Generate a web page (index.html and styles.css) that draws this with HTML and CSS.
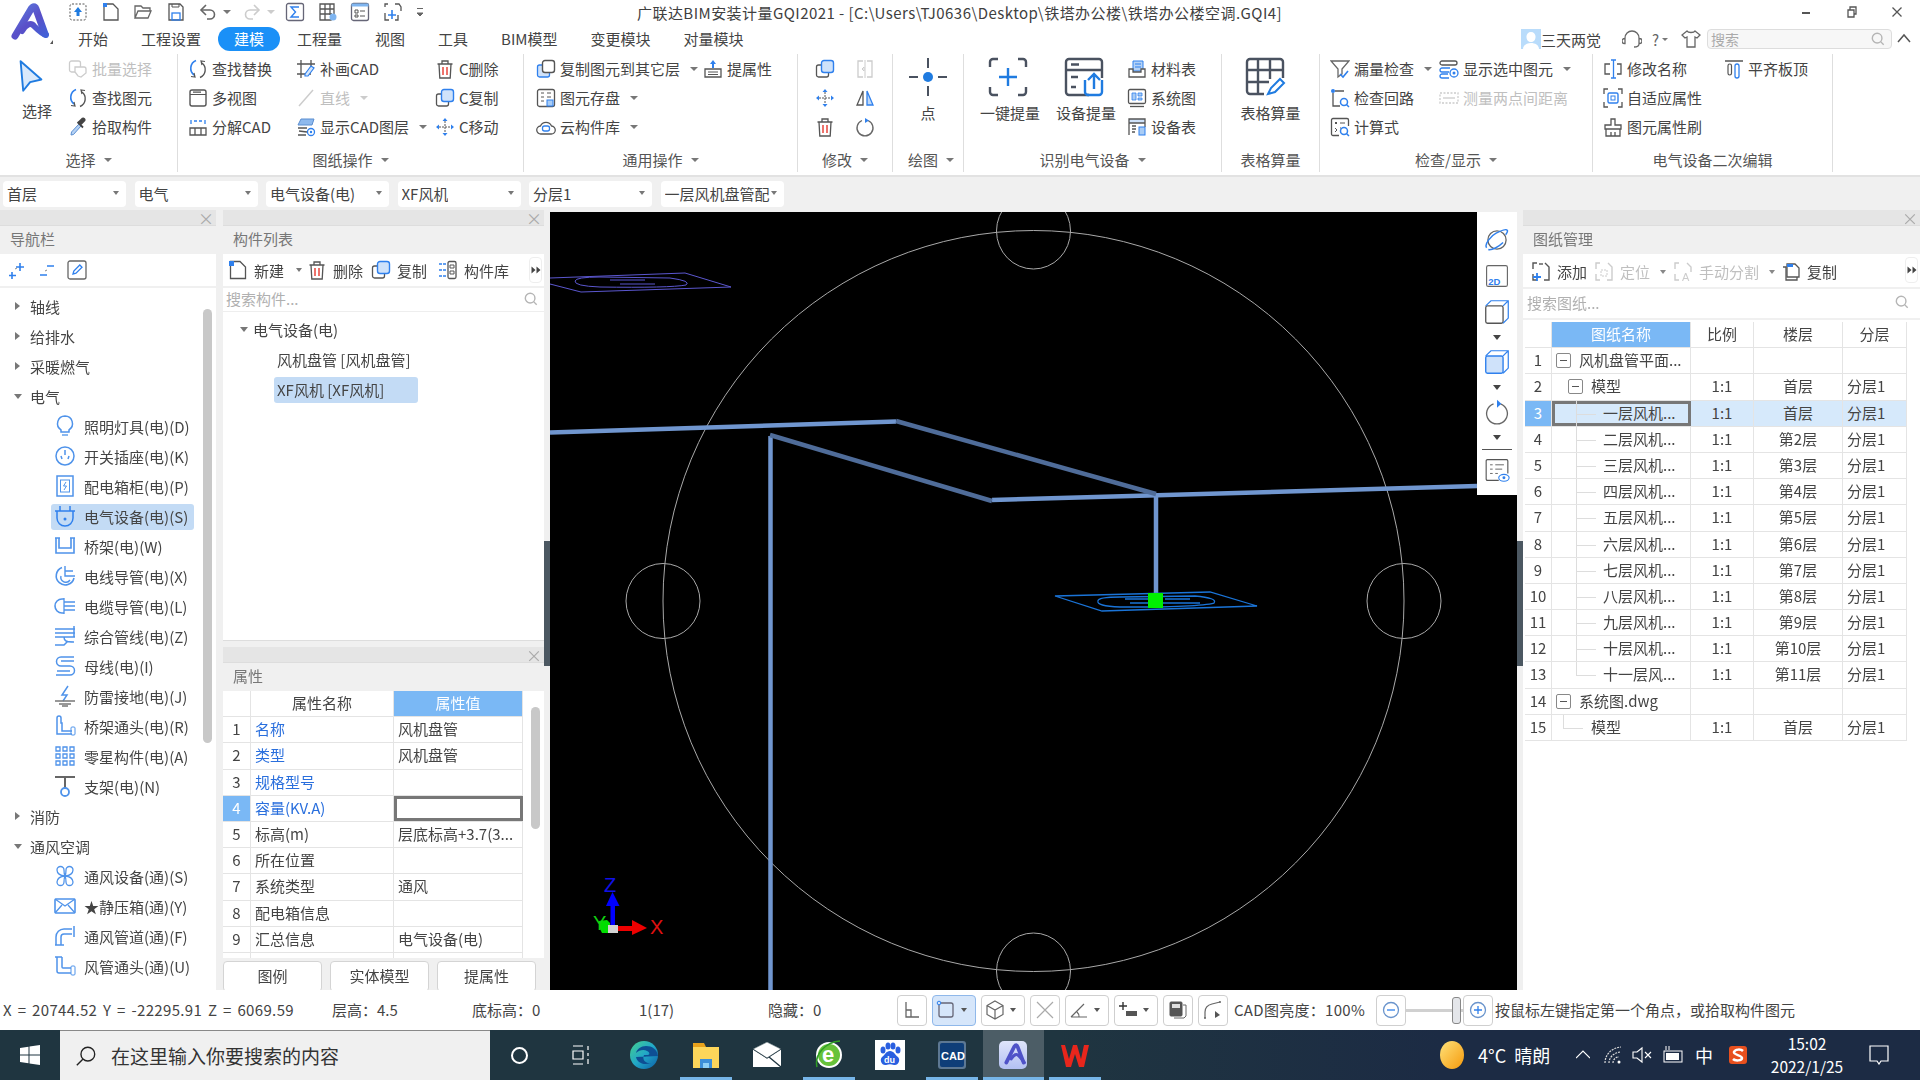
FILE: index.html
```html
<!DOCTYPE html>
<html lang="zh-CN">
<head>
<meta charset="utf-8">
<title>广联达BIM安装计量GQI2021</title>
<link rel="stylesheet" href="styles.css">
</head>
<body>
<svg class="sprite" xmlns="http://www.w3.org/2000/svg">
  <defs>
    <linearGradient id="logoGrad" gradientUnits="userSpaceOnUse" x1="15" y1="5" x2="45" y2="40"><stop offset="0" stop-color="#5a7fe0"/><stop offset=".5" stop-color="#5a4fc8"/><stop offset="1" stop-color="#3f63d8"/></linearGradient>
    <linearGradient id="edgeGrad" x1="0" y1="0" x2="1" y2="1"><stop offset="0" stop-color="#45d08e"/><stop offset=".5" stop-color="#22a8c8"/><stop offset="1" stop-color="#0c5fa8"/></linearGradient>
    <linearGradient id="sunGrad" x1="0" y1="0" x2="1" y2="1"><stop offset="0" stop-color="#ffe27a"/><stop offset="1" stop-color="#f59a0c"/></linearGradient>
    <linearGradient id="appGrad" x1="0" y1="0" x2="0" y2="1"><stop offset="0" stop-color="#dfe5fb"/><stop offset="1" stop-color="#b3c0f2"/></linearGradient>
  </defs>
  <symbol id="q-up" viewBox="0 0 20 20"><rect x="2" y="2" width="16" height="16" rx="2" fill="none" stroke="#555" stroke-dasharray="2 1.5"/><path d="M10 5l4 5h-2.500v4h-3v-4H6z" fill="#1f7be0"/></symbol>
  <symbol id="q-new" viewBox="0 0 20 20"><path d="M3 2h9l5 5v11H3z" fill="none" stroke="#555" stroke-width="1.300"/><rect x="2" y="1" width="4" height="4" fill="#2f80ed"/></symbol>
  <symbol id="q-open" viewBox="0 0 20 20"><path d="M2 16V4h6l2 2h7v3M2 16l3-7h13l-3 7z" fill="none" stroke="#666" stroke-width="1.300"/></symbol>
  <symbol id="q-save" viewBox="0 0 20 20"><path d="M3 2h11l3 3v13H3z" fill="none" stroke="#555" stroke-width="1.300"/><rect x="6" y="11" width="8" height="7" fill="none" stroke="#2f80ed" stroke-width="1.300"/><path d="M6 2v3h7V2" fill="none" stroke="#555"/></symbol>
  <symbol id="q-undo" viewBox="0 0 20 20"><path d="M4 8h8a4.500 4.500 0 0 1 0 9H9" fill="none" stroke="#666" stroke-width="1.600"/><path d="M8 3L3 8l5 5" fill="none" stroke="#666" stroke-width="1.600"/></symbol>
  <symbol id="q-redo" viewBox="0 0 20 20"><path d="M16 8H8a4.500 4.500 0 0 0 0 9h3" fill="none" stroke="#ccc" stroke-width="1.600"/><path d="M12 3l5 5-5 5" fill="none" stroke="#ccc" stroke-width="1.600"/></symbol>
  <symbol id="q-sum" viewBox="0 0 20 20"><rect x="1.500" y="1.500" width="17" height="17" rx="2" fill="none" stroke="#667" stroke-width="1.300"/><path d="M14 5H6l4.500 5L6 15h8" fill="none" stroke="#2f80ed" stroke-width="1.400"/></symbol>
  <symbol id="q-grid" viewBox="0 0 20 20"><path d="M2 2h14v11h-3v5H2zM2 7h14M2 12h12M7 2v16M12 2v11" fill="none" stroke="#555" stroke-width="1.300"/><circle cx="15" cy="15" r="3.500" fill="#7fb5f0"/></symbol>
  <symbol id="q-form" viewBox="0 0 20 20"><rect x="1.500" y="1.500" width="17" height="17" rx="2" fill="none" stroke="#667" stroke-width="1.300"/><rect x="1.500" y="1.500" width="17" height="3" fill="#7fb5f0"/><path d="M5 8h3v3H5zM5 13h3v2H5zM10 9h5M10 14h5" fill="none" stroke="#555"/></symbol>
  <symbol id="q-crop" viewBox="0 0 20 20"><path d="M5 2H2v3M12 2h4l2 3v4M2 11v7h4M15 13v5h-3" fill="none" stroke="#555" stroke-width="1.300"/><path d="M9 8v9M5 13h8" fill="none" stroke="#2f80ed" stroke-width="1.600"/></symbol>

  <symbol id="r-batch" viewBox="0 0 20 20"><rect x="1.500" y="2" width="11" height="11" rx="2" fill="none" stroke="#ccc" stroke-width="1.300"/><path d="M7 8h9a2 2 0 0 1 2 2v4l-5 4-3-1-3-4z" fill="#fff" stroke="#ccc" stroke-width="1.300"/></symbol>
  <symbol id="r-find" viewBox="0 0 20 20"><path d="M8 1.500A8.500 8.500 0 0 0 6 16" fill="none" stroke="#2f80ed" stroke-width="1.600"/><path d="M12 18.500A8.500 8.500 0 0 0 14 4" fill="none" stroke="#555" stroke-width="1.400"/><path d="M6 14l1 4-4-.5M14 6l-1-4 4 .5" fill="none" stroke="#555" stroke-width="1.200"/></symbol>
  <symbol id="r-pick" viewBox="0 0 20 20"><path d="M3 18l2.500-.5L13 9l-2-2-7.500 8z" fill="#b5d2f5" stroke="#5b8ed0" stroke-width="1"/><path d="M9.500 5L15 10.500M12 8l4.500-4.500a1.500 1.500 0 0 0-2-2L10 6" fill="#444" stroke="#444" stroke-width="1.800"/></symbol>
  <symbol id="r-multi" viewBox="0 0 20 20"><rect x="2" y="2" width="16" height="16" rx="2" fill="none" stroke="#555" stroke-width="1.400"/><path d="M2 6.500h16M5 4.200h8" fill="none" stroke="#555" stroke-width="1.200"/></symbol>
  <symbol id="r-explode" viewBox="0 0 20 20"><path d="M3 3v4M17 3v4M6 4h3M11 4h3" fill="none" stroke="#2f80ed" stroke-width="1.300"/><path d="M2 11h16v7H2zM7 11v7M13 11v7" fill="none" stroke="#555" stroke-width="1.300"/></symbol>
  <symbol id="r-patch" viewBox="0 0 20 20"><path d="M1 5h18M1 15h14M5 1v18M15 1v8" fill="none" stroke="#555" stroke-width="1.300"/><path d="M9 15l6-8 3 2-6 8-3 0z" fill="#d5e6fb" stroke="#2f80ed" stroke-width="1.200"/></symbol>
  <symbol id="r-line" viewBox="0 0 20 20"><path d="M3 18L17 2" fill="none" stroke="#ccc" stroke-width="1.500"/></symbol>
  <symbol id="r-layers" viewBox="0 0 20 20"><path d="M5 2h13l-2 6H2z" fill="#8db9ee" stroke="#5b8ed0"/><path d="M2 11h9M3 14l8 1M2 18h8" fill="none" stroke="#555" stroke-width="1.300"/><circle cx="15" cy="15" r="3.500" fill="#fff" stroke="#2f80ed" stroke-width="1.300"/><circle cx="15" cy="15" r="1.200" fill="#2f80ed"/></symbol>
  <symbol id="r-trash" viewBox="0 0 20 20"><path d="M4 5l.8 14h10.400L16 5zM2.500 5h15M7 5V2h6v3" fill="none" stroke="#555" stroke-width="1.300"/><path d="M8 8v8M12 8v8" fill="none" stroke="#e8463c" stroke-width="1.500"/></symbol>
  <symbol id="r-copy" viewBox="0 0 20 20"><rect x="1.500" y="6" width="12" height="12" rx="2" fill="#fff" stroke="#555" stroke-width="1.300"/><rect x="6.500" y="1.500" width="12" height="12" rx="2.500" fill="#cfe2fa" stroke="#2f80ed" stroke-width="1.400"/></symbol>
  <symbol id="r-move" viewBox="0 0 20 20"><path d="M10 1l-2.500 3h5zM10 19l-2.500-3h5zM1 10l3-2.500v5zM19 10l-3-2.500v5z" fill="#2f80ed"/><path d="M10 4v12M4 10h12" fill="none" stroke="#555" stroke-width="1" stroke-dasharray="2 1"/></symbol>
  <symbol id="r-copyto" viewBox="0 0 20 20"><rect x="1.500" y="6" width="12" height="12" rx="2" fill="#cfe2fa" stroke="#2f80ed" stroke-width="1.300"/><rect x="6.500" y="1.500" width="12" height="12" rx="2.500" fill="#fff" stroke="#555" stroke-width="1.400"/></symbol>
  <symbol id="r-store" viewBox="0 0 20 20"><rect x="1.500" y="1.500" width="17" height="17" rx="2" fill="none" stroke="#555" stroke-width="1.300"/><path d="M5 5h3M11 5h4M5 9h3M11 9h4M5 13h3" fill="none" stroke="#555"/><rect x="11" y="12" width="6" height="6" fill="#a9ccf5" stroke="#2f80ed"/></symbol>
  <symbol id="r-cloud" viewBox="0 0 20 20"><path d="M5 17a4 4 0 0 1-.5-8A6 6 0 0 1 15.500 9a4 4 0 0 1-.5 8z" fill="none" stroke="#555" stroke-width="1.300"/><rect x="6.500" y="9" width="7" height="5" rx="2" fill="none" stroke="#2f80ed" stroke-width="1.300"/></symbol>
  <symbol id="r-extract" viewBox="0 0 20 20"><path d="M10 1l3 4h-2v4H9V5H7z" fill="#2f80ed"/><path d="M2 10h16v8H2z" fill="none" stroke="#555" stroke-width="1.300"/><path d="M5 13h10M5 15.500h10" fill="none" stroke="#555"/></symbol>
  <symbol id="r-split" viewBox="0 0 20 20"><path d="M8 2H3v16h5M12 2h5v16h-5" fill="none" stroke="#ccc" stroke-width="1.300"/><path d="M10 1v18M7 10l2-2v4z" fill="none" stroke="#ccc"/></symbol>
  <symbol id="r-mirror" viewBox="0 0 20 20"><path d="M8 3L2 17h6z" fill="none" stroke="#555" stroke-width="1.300"/><path d="M12 3l6 14h-6z" fill="#bfd8f7" stroke="#2f80ed" stroke-width="1.300"/></symbol>
  <symbol id="r-rotate" viewBox="0 0 20 20"><path d="M13 3.500a8 8 0 1 1-6 0" fill="none" stroke="#666" stroke-width="1.300"/><path d="M10 1l4 2.500-4 2.500z" fill="#2f80ed"/></symbol>
  <symbol id="r-point" viewBox="0 0 42 42"><circle cx="21" cy="21" r="5" fill="#1f7be0"/><path d="M21 2v10M21 30v10M2 21h9M31 21h9" fill="none" stroke="#4a5260" stroke-width="2"/></symbol>
  <symbol id="r-oneclick" viewBox="0 0 42 42"><path d="M11 3H6a3 3 0 0 0-3 3v5M31 3h5a3 3 0 0 1 3 3v5M11 39H6a3 3 0 0 1-3-3v-5M31 39h5a3 3 0 0 0 3-3v-5" fill="none" stroke="#4a5260" stroke-width="2.400"/><path d="M21 12v18M12 21h18" fill="none" stroke="#1f7be0" stroke-width="2.400"/></symbol>
  <symbol id="r-device" viewBox="0 0 42 42"><path d="M39 22V6a3 3 0 0 0-3-3H6a3 3 0 0 0-3 3v30a3 3 0 0 0 3 3h20M3 14h36" fill="none" stroke="#4a5260" stroke-width="2.400"/><path d="M8 8.500h8M8 21h7M8 31h5" fill="none" stroke="#4a5260" stroke-width="2.400"/><path d="M22 24v12a3 3 0 0 0 3 3h11a3 3 0 0 0 3-3V24M31 33V18M25 24l6-6 6 6" fill="none" stroke="#1f7be0" stroke-width="2.400"/></symbol>
  <symbol id="r-table" viewBox="0 0 42 42"><path d="M20 38H6a3 3 0 0 1-3-3V6a3 3 0 0 1 3-3h30a3 3 0 0 1 3 3v16M3 14h36M3 26h22M14 3v35M26 3v20" fill="none" stroke="#4a5260" stroke-width="2.400"/><path d="M24 38l3-6 9-9 4 4-9 9z" fill="#fff" stroke="#1f7be0" stroke-width="2"/></symbol>
  <symbol id="r-material" viewBox="0 0 20 20"><path d="M6 2h10v10H6z" fill="#b5d2f5" stroke="#2f80ed"/><path d="M8 5h6M8 8h6" fill="none" stroke="#2f80ed"/><path d="M2 10h4v3h8v-3h4v8H2z" fill="#fff" stroke="#555" stroke-width="1.300"/></symbol>
  <symbol id="r-sysmap" viewBox="0 0 20 20"><rect x="1.500" y="1.500" width="17" height="14" rx="1.500" fill="none" stroke="#555" stroke-width="1.300"/><path d="M5 5h4v7H5zM11 5h4v3h-4zM11 10h4v2h-4z" fill="#a9ccf5" stroke="#2f80ed" stroke-width=".8"/><path d="M3 18.500h14" fill="none" stroke="#555" stroke-width="1.300"/></symbol>
  <symbol id="r-devtable" viewBox="0 0 20 20"><rect x="2" y="2" width="16" height="4" fill="#cfe2fa"/><path d="M2 18V2h16v8M2 6h16M5 9h4M5 12h4M5 15h3" fill="none" stroke="#555" stroke-width="1.300"/><rect x="12" y="10" width="6" height="8" fill="#a9ccf5" stroke="#2f80ed"/></symbol>
  <symbol id="r-funnel" viewBox="0 0 20 20"><path d="M1 2h18l-7 8v5l-4 3v-8z" fill="none" stroke="#666" stroke-width="1.300"/><path d="M10 15l3 3 5-6" fill="none" stroke="#2f80ed" stroke-width="1.600"/></symbol>
  <symbol id="r-showsel" viewBox="0 0 20 20"><rect x="1" y="2" width="17" height="4" rx="2" fill="none" stroke="#555" stroke-width="1.300"/><path d="M11 9H3a2 2 0 0 0 0 4h7M9 15H3a2 2 0 0 0 0 4h7" fill="none" stroke="#2f80ed" stroke-width="1.300"/><circle cx="15" cy="14" r="4" fill="#fff" stroke="#2f80ed" stroke-width="1.300"/><circle cx="15" cy="14" r="1.500" fill="#2f80ed"/></symbol>
  <symbol id="r-loop" viewBox="0 0 20 20"><circle cx="3" cy="3" r="2" fill="#2f80ed"/><path d="M5 3h9M3 5v13h7" fill="none" stroke="#555" stroke-width="1.300"/><circle cx="14" cy="14" r="3.500" fill="none" stroke="#2f80ed" stroke-width="1.500"/><path d="M16.500 16.500L19 19" fill="none" stroke="#2f80ed" stroke-width="1.500"/></symbol>
  <symbol id="r-measure" viewBox="0 0 20 20"><rect x="1" y="5" width="18" height="10" fill="none" stroke="#ccc" stroke-width="1.300" stroke-dasharray="2 1.500"/><path d="M4 10h12" fill="none" stroke="#ccc" stroke-width="1.300"/></symbol>
  <symbol id="r-formula" viewBox="0 0 20 20"><path d="M9 18.500H3a1.500 1.500 0 0 1-1.500-1.500V3A1.500 1.500 0 0 1 3 1.500h14A1.500 1.500 0 0 1 18.500 3v6" fill="none" stroke="#555" stroke-width="1.300"/><path d="M5 5l2 2M7 5L5 7M10 6h5M5 11l2 2-2 2M10 11h1" fill="none" stroke="#555"/><circle cx="14" cy="14" r="3.500" fill="none" stroke="#2f80ed" stroke-width="1.500"/><path d="M16.500 16.500L19 19" fill="none" stroke="#2f80ed" stroke-width="1.500"/></symbol>
  <symbol id="r-rename" viewBox="0 0 20 20"><path d="M7 5H2v10h5M14 5h4v10h-4" fill="none" stroke="#555" stroke-width="1.300"/><path d="M8 1h5M8 19h5M10.500 1v18" fill="none" stroke="#2f80ed" stroke-width="1.300"/></symbol>
  <symbol id="r-adapt" viewBox="0 0 20 20"><path d="M5 1H1v5M15 1h4v5M5 19H1v-5M15 19h4v-5" fill="none" stroke="#555" stroke-width="1.300"/><rect x="5" y="5" width="10" height="10" rx="1.500" fill="none" stroke="#2f80ed" stroke-width="1.400"/><rect x="8" y="8" width="4" height="4" fill="none" stroke="#2f80ed"/></symbol>
  <symbol id="r-brush" viewBox="0 0 20 20"><path d="M8 8V2h4v6h6v4H2V8zM3 12v7h14v-7M8 15v4M12 15v4" fill="none" stroke="#555" stroke-width="1.300"/></symbol>
  <symbol id="r-align" viewBox="0 0 20 20"><path d="M1 2h18" fill="none" stroke="#555" stroke-width="1.500"/><rect x="4" y="5" width="3.500" height="11" rx="1.700" fill="none" stroke="#555" stroke-width="1.200"/><rect x="11" y="5" width="4" height="14" rx="2" fill="none" stroke="#2f80ed" stroke-width="1.300"/></symbol>
  <symbol id="r-select" viewBox="0 0 30 38"><path d="M3 2l24 21-13 3-8 10z" fill="#d9e9fb" stroke="#1f7be0" stroke-width="2.200" stroke-linejoin="round"/></symbol>

  <symbol id="n-plus" viewBox="0 0 20 20"><path d="M13 3v8M9 7h8M5 12v7M2 15.500h7" fill="none" stroke="#2f80ed" stroke-width="1.600"/><path d="M8 9l2-1" fill="none" stroke="#888"/></symbol>
  <symbol id="n-minus" viewBox="0 0 20 20"><path d="M10 6h7M3 15h7" fill="none" stroke="#2f80ed" stroke-width="1.600"/><path d="M8 11l2-1" fill="none" stroke="#888"/></symbol>
  <symbol id="n-edit" viewBox="0 0 20 20"><rect x="1" y="1" width="18" height="18" rx="2" fill="none" stroke="#666" stroke-width="1.300"/><path d="M6 14l.8-3 6-6 2.200 2.200-6 6z" fill="none" stroke="#2f80ed" stroke-width="1.300"/></symbol>
  <symbol id="t-bulb" viewBox="0 0 22 22"><path d="M11 1a7.500 7.500 0 0 0-4 13.800V17h8v-2.200A7.500 7.500 0 0 0 11 1z" fill="none" stroke="#4f93ea" stroke-width="1.500"/><path d="M8 20h6" fill="none" stroke="#8ab8f0" stroke-width="2"/></symbol>
  <symbol id="t-socket" viewBox="0 0 22 22"><circle cx="11" cy="11" r="9" fill="none" stroke="#4f93ea" stroke-width="1.500"/><path d="M11 5v5M7 11l1 3M15 11l-1 3" fill="none" stroke="#4f93ea" stroke-width="1.500"/></symbol>
  <symbol id="t-panel" viewBox="0 0 22 22"><rect x="3" y="1" width="16" height="20" fill="none" stroke="#4f93ea" stroke-width="1.500"/><rect x="6.500" y="5" width="9" height="12" fill="none" stroke="#4f93ea" stroke-width="1"/><path d="M12 7l-2.500 4h3L10 15" fill="none" stroke="#4f93ea"/></symbol>
  <symbol id="t-plug" viewBox="0 0 22 22"><path d="M6 1v5M16 1v5" fill="none" stroke="#2f80ed" stroke-width="1.500"/><path d="M1 6h20M3 6v7a8 8 0 0 0 16 0V6" fill="none" stroke="#2f80ed" stroke-width="1.500"/><circle cx="11" cy="14" r="1.500" fill="#2f80ed"/></symbol>
  <symbol id="t-tray" viewBox="0 0 22 22"><path d="M2 3v15h18V3M5 3v10h12V3M1 3h5M16 3h5" fill="none" stroke="#4f93ea" stroke-width="1.600"/></symbol>
  <symbol id="t-conduit" viewBox="0 0 22 22"><path d="M8 2.500A9 9 0 1 0 20 13" fill="none" stroke="#4f93ea" stroke-width="1.600"/><path d="M11 1v10h10M11 6h8M7 11a5 5 0 0 0 9 4" fill="none" stroke="#4f93ea" stroke-width="1.400"/></symbol>
  <symbol id="t-cable" viewBox="0 0 22 22"><path d="M10 4H8a7 7 0 0 0 0 14h2" fill="none" stroke="#4f93ea" stroke-width="1.600"/><path d="M10 3v16M10 7h11M10 11h11M10 15h11" fill="none" stroke="#4f93ea" stroke-width="1.300"/></symbol>
  <symbol id="t-combined" viewBox="0 0 22 22"><path d="M1 4h20M1 8h20M1 12h20M20 1v11M10 12c0 4 2 5 10 5M1 20h9l4-4" fill="none" stroke="#4f93ea" stroke-width="1.500"/></symbol>
  <symbol id="t-bus" viewBox="0 0 22 22"><path d="M20 2H7a4 4 0 0 0 0 9h9a3.500 3.500 0 0 1 0 9H2M20 6H7M3 16h13" fill="none" stroke="#4f93ea" stroke-width="1.500"/></symbol>
  <symbol id="t-bolt" viewBox="0 0 22 22"><path d="M14 1L8 10h5l-4 6" fill="none" stroke="#4f93ea" stroke-width="1.500"/><path d="M1 16h20M5 19h12M8 21h6" fill="none" stroke="#777" stroke-width="1.300"/></symbol>
  <symbol id="t-tee" viewBox="0 0 22 22"><path d="M3 8V3a2 2 0 0 1 4 0v5h1v8h10M3 8v11h15" fill="none" stroke="#4f93ea" stroke-width="1.500"/><rect x="17" y="12" width="4" height="8" rx="1" fill="none" stroke="#4f93ea"/></symbol>
  <symbol id="t-dots" viewBox="0 0 22 22"><path d="M2 2h4v4H2zM9 2h4v4H9zM16 2h4v4h-4zM2 9h4v4H2zM9 9h4v4H9zM16 9h4v4h-4zM2 16h4v4H2zM9 16h4v4H9zM16 16h4v4h-4z" fill="none" stroke="#4f93ea" stroke-width="1.300"/></symbol>
  <symbol id="t-bracket" viewBox="0 0 22 22"><path d="M1 2h20M11 2v12" fill="none" stroke="#666" stroke-width="2"/><circle cx="11" cy="17" r="4" fill="none" stroke="#4f93ea" stroke-width="1.800"/></symbol>
  <symbol id="t-fan" viewBox="0 0 22 22"><path d="M11 11C6 11 3 8 3 5a3.500 3.500 0 0 1 7 0c0 2 0 4 1 6zM11 11c5 0 8-3 8-6a3.500 3.500 0 0 0-7 0c0 2 0 4-1 6zM11 11c-5 0-8 3-8 6a3.500 3.500 0 0 0 7 0c0-2 0-4 1-6zM11 11c5 0 8 3 8 6a3.500 3.500 0 0 1-7 0c0-2 0-4-1-6z" fill="none" stroke="#4f93ea" stroke-width="1.300"/></symbol>
  <symbol id="t-box" viewBox="0 0 22 22"><rect x="1" y="4" width="20" height="14" rx="1" fill="none" stroke="#4f93ea" stroke-width="1.600"/><path d="M1 4l10 7 10-7M1 18l7-8M21 18l-7-8" fill="none" stroke="#4f93ea" stroke-width="1.300"/></symbol>
  <symbol id="t-duct" viewBox="0 0 22 22"><path d="M2 20v-8a8 8 0 0 1 8-8h8M7 20v-8a3 3 0 0 1 3-3h8M20 1v11M1 20h9" fill="none" stroke="#4f93ea" stroke-width="1.500"/></symbol>
  <symbol id="t-ductfit" viewBox="0 0 22 22"><path d="M1 2h7M3 2v14a2 2 0 0 0 2 2h12M8 2v10a1 1 0 0 0 1 1h8" fill="none" stroke="#4f93ea" stroke-width="1.500"/><rect x="17" y="11" width="4" height="9" rx="1" fill="none" stroke="#4f93ea"/></symbol>

  <symbol id="l-new" viewBox="0 0 20 20"><path d="M2.500 1.500H12l5.500 5.500v11.500h-15z" fill="#fff" stroke="#555" stroke-width="1.300"/><path d="M1 1h5v5H1z" fill="#2f80ed"/></symbol>
  <symbol id="l-lib" viewBox="0 0 20 20"><rect x="10" y="1.500" width="8" height="17" rx="1.500" fill="none" stroke="#555" stroke-width="1.300"/><path d="M12 5h4v3h-4zM12 11h4v3h-4z" fill="none" stroke="#555"/><path d="M1 4h7M1 10h7M1 16h7" fill="none" stroke="#2f80ed" stroke-width="1.500" stroke-dasharray="3 1"/></symbol>
  <symbol id="l-add" viewBox="0 0 20 20"><path d="M6 1H2v6M14 1l4 4v13h-5M2 12v6h4" fill="none" stroke="#555" stroke-width="1.400"/><path d="M6 11v8M2 15h8" fill="none" stroke="#2f80ed" stroke-width="1.800"/><path d="M8 2h4" fill="none" stroke="#555" stroke-width="1.400"/></symbol>
  <symbol id="l-locate" viewBox="0 0 20 20"><path d="M6 1H2v6M14 1l4 4v13h-5M2 12v6h4" fill="none" stroke="#ccc" stroke-width="1.400"/><path d="M7 8h6v6H7z" fill="none" stroke="#ccc" stroke-dasharray="2 1"/></symbol>
  <symbol id="l-copy2" viewBox="0 0 20 20"><path d="M2 5h3v13h11v-3" fill="none" stroke="#555" stroke-width="1.300"/><path d="M6 2h8l4 4v9H6z" fill="#fff" stroke="#555" stroke-width="1.300"/><path d="M6 2h6v3H6z" fill="#2f80ed"/></symbol>
  <symbol id="s-planet" viewBox="0 0 30 30"><circle cx="15" cy="15" r="10.500" fill="none" stroke="#666" stroke-width="1.500"/><path d="M3 24C0 20 8 10 14 7s12-5 13-3c.5 1-.5 3-2 5M5 26c4 1 12-3 17-8" fill="none" stroke="#2f80ed" stroke-width="1.700"/></symbol>
  <symbol id="s-cube" viewBox="0 0 30 30"><rect x="2" y="8" width="20" height="20" rx="2" fill="none" stroke="#555" stroke-width="1.500"/><path d="M2 8l6-6h20v20l-6 6M22 8l6-6" fill="none" stroke="#2f80ed" stroke-width="1.400"/></symbol>
  <symbol id="s-cubef" viewBox="0 0 30 30"><rect x="2" y="8" width="20" height="20" rx="2" fill="#cfe2fa" stroke="#2f80ed" stroke-width="1.600"/><path d="M2 8l6-6h20v20l-6 6M22 8l6-6" fill="none" stroke="#2f80ed" stroke-width="1.400"/></symbol>
  <symbol id="s-rot" viewBox="0 0 30 30"><path d="M19 5.500a12 12 0 1 1-8 0" fill="none" stroke="#666" stroke-width="1.500"/><path d="M15 1l5 4.500L15 10z" fill="#2f80ed"/></symbol>
  <symbol id="s-list" viewBox="0 0 30 30"><path d="M17 27H4a1.500 1.500 0 0 1-1.500-1.500V4.500A1.500 1.500 0 0 1 4 3h22a1.500 1.500 0 0 1 1.500 1.500V19" fill="none" stroke="#555" stroke-width="1.300"/><path d="M7 9h3M13 9h10M7 14h3M13 14h8M7 19h3M13 19h3" fill="none" stroke="#555"/><ellipse cx="23" cy="24" rx="6" ry="4" fill="#fff" stroke="#2f80ed" stroke-width="1.300"/><circle cx="23" cy="24" r="1.700" fill="#2f80ed"/></symbol>
  <symbol id="b-angle" viewBox="0 0 20 20"><path d="M4 2v15h13M4 10h5v7" fill="none" stroke="#666" stroke-width="1.300"/></symbol>
  <symbol id="b-rect" viewBox="0 0 20 20"><rect x="3" y="3" width="14" height="14" rx="2" fill="none" stroke="#667" stroke-width="1.300"/><circle cx="3" cy="3" r="1.800" fill="#cfe2fa" stroke="#2f80ed"/></symbol>
  <symbol id="b-cube" viewBox="0 0 20 20"><path d="M10 1l8 4.500v9L10 19l-8-4.500v-9zM2 5.500l8 4.500 8-4.500M10 10v9" fill="none" stroke="#666" stroke-width="1.200"/></symbol>
  <symbol id="b-x" viewBox="0 0 20 20"><path d="M2 2l16 16M18 2L2 18" fill="none" stroke="#aaa" stroke-width="1.200"/></symbol>
  <symbol id="b-ang" viewBox="0 0 20 20"><path d="M2 17h16M2 17L15 4M10 17a6 6 0 0 0-2-5" fill="none" stroke="#666" stroke-width="1.200"/></symbol>
  <symbol id="b-pm" viewBox="0 0 20 20"><path d="M5 2v8M1 6h8" fill="none" stroke="#333" stroke-width="1.400"/><rect x="8" y="11" width="11" height="5" fill="#555"/></symbol>
  <symbol id="b-tile" viewBox="0 0 20 20"><rect x="2" y="2" width="12" height="14" rx="1" fill="#555" stroke="#555"/><rect x="4" y="4" width="8" height="4" fill="#ddd"/><path d="M15 5h3v11l-2 2H6" fill="none" stroke="#666"/></symbol>
  <symbol id="b-curve" viewBox="0 0 20 20"><path d="M2 18v-6c0-4 3-7 7-8l8-2" fill="none" stroke="#666" stroke-width="1.200"/><path d="M12 11v7l5-3z" fill="#555"/><circle cx="2" cy="18" r="1" fill="#666"/><circle cx="17" cy="2" r="1" fill="#666"/></symbol>
  <symbol id="mag" viewBox="0 0 16 16"><circle cx="7" cy="7" r="5.500" fill="none" stroke="#b5b5b5" stroke-width="1.600"/><path d="M11 11l3.500 3.500" fill="none" stroke="#b5b5b5" stroke-width="1.600"/></symbol>
  <symbol id="more2" viewBox="0 0 10 10"><path d="M.5 1.500L4.500 5 .5 8.500zM5.500 1.500L9.500 5 5.500 8.500z" fill="#444"/></symbol>
</svg>

<div class="app">
  <header class="header">
    <div class="logo">
      <svg class="logo-svg" viewBox="0 0 60 50"><path d="M15 36L31 9c2-3 4-3 5 0l9 25" fill="none" stroke="url(#logoGrad)" stroke-width="7" stroke-linecap="round"/><path d="M22 31c4-7 9-9 12-5 3 3 8 8 12 9" fill="none" stroke="url(#logoGrad)" stroke-width="6" stroke-linecap="round"/><path d="M50 44l3-4v4z" fill="#555"/></svg>
    </div>
    <div class="header-main">
      <div class="titlebar">
        <div class="quick">
          <span class="q"><svg class="i20"><use href="#q-up"/></svg></span>
          <span class="q"><svg class="i20"><use href="#q-new"/></svg></span>
          <span class="q"><svg class="i20"><use href="#q-open"/></svg></span>
          <span class="q"><svg class="i20"><use href="#q-save"/></svg></span>
          <span class="q q-undo"><svg class="i20"><use href="#q-undo"/></svg><i class="caret"></i></span>
          <span class="q q-redo"><svg class="i20"><use href="#q-redo"/></svg><i class="caret caret-light"></i></span>
          <span class="q"><svg class="i20"><use href="#q-sum"/></svg></span>
          <span class="q"><svg class="i20"><use href="#q-grid"/></svg></span>
          <span class="q"><svg class="i20"><use href="#q-form"/></svg></span>
          <span class="q"><svg class="i20"><use href="#q-crop"/></svg></span>
          <span class="q q-more">
            <svg class="i10" viewBox="0 0 10 10"><path d="M2 1.500h6M5 4h.01M2 6l3 3 3-3z" fill="#666" stroke="#666"/></svg>
          </span>
        </div>
        <div class="title">广联达BIM安装计量GQI2021 - [C:\Users\TJ0636\Desktop\铁塔办公楼\铁塔办公楼空调.GQI4]</div>
        <div class="winbtns">
          <span class="wb"><svg class="i12" viewBox="0 0 12 12"><path d="M2 7h8" stroke="#555" stroke-width="2"/></svg></span>
          <span class="wb"><svg class="i12" viewBox="0 0 12 12"><path d="M2 4h6v7H2zM4 4V1h6v7H8" fill="none" stroke="#555" stroke-width="1.300"/></svg></span>
          <span class="wb"><svg class="i12" viewBox="0 0 12 12"><path d="M1.500 1.500l9 9M10.500 1.500l-9 9" stroke="#555" stroke-width="1.300"/></svg></span>
        </div>
      </div>
      <div class="tabsbar">
        <nav class="tabs">
          <span>开始</span><span>工程设置</span><span class="tab-on">建模</span><span>工程量</span><span>视图</span><span>工具</span><span>BIM模型</span><span>变更模块</span><span>对量模块</span>
        </nav>
        <div class="userbar">
          <svg class="avatar" viewBox="0 0 20 20"><rect width="20" height="20" fill="#b9dcfb"/><path d="M10 3a4.500 4.500 0 0 1 4.500 5c0 3-2 5-4.500 5s-4.500-2-4.500-5A4.500 4.500 0 0 1 10 3zM2 20c0-4 4-6 8-6s8 2 8 6z" fill="#fff"/></svg>
          <span class="uname">三天两觉</span>
          <svg class="i20 u-head" viewBox="0 0 20 20"><path d="M3 12V9a7 7 0 0 1 14 0v3M3 9.500h-.5a1.500 1.500 0 0 0 0 5H3zM17 9.500h.5a1.500 1.500 0 0 1 0 5H17zM17 15c0 2-2 3-5 3" fill="none" stroke="#666" stroke-width="1.300"/></svg>
          <span class="u-help">?</span><i class="caret caret-help"></i>
          <svg class="i20 u-shirt" viewBox="0 0 20 20"><path d="M6 2L1 6l3 3 2-1v10h8V8l2 1 3-3-5-4c-1 2-7 2-8 0z" fill="none" stroke="#666" stroke-width="1.300"/></svg>
          <div class="usearch"><span>搜索</span><svg class="i14"><use href="#mag"/></svg></div>
          <svg class="i14 u-up" viewBox="0 0 14 14"><path d="M1 10l6-7 6 7" fill="none" stroke="#555" stroke-width="1.500"/></svg>
        </div>
      </div>
    </div>
  </header>

  <section class="ribbon">
    <div class="rg g1">
      <div class="rb">
        <div class="big big-sel"><svg class="sel-icon"><use href="#r-select"/></svg><span>选择</span></div>
        <div class="col">
          <div class="ri off"><svg class="i20"><use href="#r-batch"/></svg>批量选择</div>
          <div class="ri"><svg class="i20"><use href="#r-find"/></svg>查找图元</div>
          <div class="ri"><svg class="i20"><use href="#r-pick"/></svg>拾取构件</div>
        </div>
      </div>
      <div class="rl">选择<i class="caret"></i></div>
    </div>
    <div class="rg g2">
      <div class="rb">
        <div class="col c108">
          <div class="ri"><svg class="i20"><use href="#r-find"/></svg>查找替换</div>
          <div class="ri"><svg class="i20"><use href="#r-multi"/></svg>多视图</div>
          <div class="ri"><svg class="i20"><use href="#r-explode"/></svg>分解CAD</div>
        </div>
        <div class="col c139">
          <div class="ri"><svg class="i20"><use href="#r-patch"/></svg>补画CAD</div>
          <div class="ri off"><svg class="i20"><use href="#r-line"/></svg>直线<i class="caret caret-light"></i></div>
          <div class="ri"><svg class="i20"><use href="#r-layers"/></svg>显示CAD图层<i class="caret"></i></div>
        </div>
        <div class="col">
          <div class="ri"><svg class="i20"><use href="#r-trash"/></svg>C删除</div>
          <div class="ri"><svg class="i20"><use href="#r-copy"/></svg>C复制</div>
          <div class="ri"><svg class="i20"><use href="#r-move"/></svg>C移动</div>
        </div>
      </div>
      <div class="rl">图纸操作<i class="caret"></i></div>
    </div>
    <div class="rg g3">
      <div class="rb">
        <div class="col c167">
          <div class="ri"><svg class="i20"><use href="#r-copyto"/></svg>复制图元到其它层<i class="caret"></i></div>
          <div class="ri"><svg class="i20"><use href="#r-store"/></svg>图元存盘<i class="caret"></i></div>
          <div class="ri"><svg class="i20"><use href="#r-cloud"/></svg>云构件库<i class="caret"></i></div>
        </div>
        <div class="col">
          <div class="ri"><svg class="i20"><use href="#r-extract"/></svg>提属性</div>
        </div>
      </div>
      <div class="rl">通用操作<i class="caret"></i></div>
    </div>
    <div class="rg g4">
      <div class="rb">
        <div class="col c40">
          <div class="ri"><svg class="i20"><use href="#r-copy"/></svg></div>
          <div class="ri"><svg class="i20"><use href="#r-move"/></svg></div>
          <div class="ri"><svg class="i20"><use href="#r-trash"/></svg></div>
        </div>
        <div class="col">
          <div class="ri"><svg class="i20"><use href="#r-split"/></svg></div>
          <div class="ri"><svg class="i20"><use href="#r-mirror"/></svg></div>
          <div class="ri"><svg class="i20"><use href="#r-rotate"/></svg></div>
        </div>
      </div>
      <div class="rl">修改<i class="caret"></i></div>
    </div>
    <div class="rg g5">
      <div class="rb">
        <div class="big"><svg class="i42"><use href="#r-point"/></svg><span>点</span></div>
      </div>
      <div class="rl">绘图<i class="caret"></i></div>
    </div>
    <div class="rg g6">
      <div class="rb">
        <div class="big"><svg class="i42"><use href="#r-oneclick"/></svg><span>一键提量</span></div>
        <div class="big"><svg class="i42"><use href="#r-device"/></svg><span>设备提量</span></div>
        <div class="col">
          <div class="ri"><svg class="i20"><use href="#r-material"/></svg>材料表</div>
          <div class="ri"><svg class="i20"><use href="#r-sysmap"/></svg>系统图</div>
          <div class="ri"><svg class="i20"><use href="#r-devtable"/></svg>设备表</div>
        </div>
      </div>
      <div class="rl">识别电气设备<i class="caret"></i></div>
    </div>
    <div class="rg g7">
      <div class="rb">
        <div class="big"><svg class="i42"><use href="#r-table"/></svg><span>表格算量</span></div>
      </div>
      <div class="rl">表格算量</div>
    </div>
    <div class="rg g8">
      <div class="rb">
        <div class="col c109">
          <div class="ri"><svg class="i20"><use href="#r-funnel"/></svg>漏量检查<i class="caret"></i></div>
          <div class="ri"><svg class="i20"><use href="#r-loop"/></svg>检查回路</div>
          <div class="ri"><svg class="i20"><use href="#r-formula"/></svg>计算式</div>
        </div>
        <div class="col">
          <div class="ri"><svg class="i20"><use href="#r-showsel"/></svg>显示选中图元<i class="caret"></i></div>
          <div class="ri off"><svg class="i20"><use href="#r-measure"/></svg>测量两点间距离</div>
        </div>
      </div>
      <div class="rl">检查/显示<i class="caret"></i></div>
    </div>
    <div class="rg g9">
      <div class="rb">
        <div class="col c121">
          <div class="ri"><svg class="i20"><use href="#r-rename"/></svg>修改名称</div>
          <div class="ri"><svg class="i20"><use href="#r-adapt"/></svg>自适应属性</div>
          <div class="ri"><svg class="i20"><use href="#r-brush"/></svg>图元属性刷</div>
        </div>
        <div class="col">
          <div class="ri"><svg class="i20"><use href="#r-align"/></svg>平齐板顶</div>
        </div>
      </div>
      <div class="rl">电气设备二次编辑</div>
    </div>
  </section>

  <div class="combos">
    <div class="combo"><span>首层</span><i class="caret"></i></div>
    <div class="combo"><span>电气</span><i class="caret"></i></div>
    <div class="combo"><span>电气设备(电)</span><i class="caret"></i></div>
    <div class="combo"><span>XF风机</span><i class="caret"></i></div>
    <div class="combo"><span>分层1</span><i class="caret"></i></div>
    <div class="combo"><span>一层风机盘管配</span><i class="caret"></i></div>
  </div>

  <main class="main">
    <aside class="panel nav">
      <div class="pclose"><span>×</span></div>
      <div class="ptitle">导航栏</div>
      <div class="ptools nav-tools">
        <svg class="i20"><use href="#n-plus"/></svg>
        <svg class="i20"><use href="#n-minus"/></svg>
        <svg class="i20"><use href="#n-edit"/></svg>
      </div>
      <div class="navtree">
        <div class="tr"><i class="tri-r"></i>轴线</div>
        <div class="tr"><i class="tri-r"></i>给排水</div>
        <div class="tr"><i class="tri-r"></i>采暖燃气</div>
        <div class="tr"><i class="tri-d"></i>电气</div>
        <div class="tc"><svg class="i22"><use href="#t-bulb"/></svg>照明灯具(电)(D)</div>
        <div class="tc"><svg class="i22"><use href="#t-socket"/></svg>开关插座(电)(K)</div>
        <div class="tc"><svg class="i22"><use href="#t-panel"/></svg>配电箱柜(电)(P)</div>
        <div class="tc tc-on"><svg class="i22"><use href="#t-plug"/></svg>电气设备(电)(S)</div>
        <div class="tc"><svg class="i22"><use href="#t-tray"/></svg>桥架(电)(W)</div>
        <div class="tc"><svg class="i22"><use href="#t-conduit"/></svg>电线导管(电)(X)</div>
        <div class="tc"><svg class="i22"><use href="#t-cable"/></svg>电缆导管(电)(L)</div>
        <div class="tc"><svg class="i22"><use href="#t-combined"/></svg>综合管线(电)(Z)</div>
        <div class="tc"><svg class="i22"><use href="#t-bus"/></svg>母线(电)(I)</div>
        <div class="tc"><svg class="i22"><use href="#t-bolt"/></svg>防雷接地(电)(J)</div>
        <div class="tc"><svg class="i22"><use href="#t-tee"/></svg>桥架通头(电)(R)</div>
        <div class="tc"><svg class="i22"><use href="#t-dots"/></svg>零星构件(电)(A)</div>
        <div class="tc"><svg class="i22"><use href="#t-bracket"/></svg>支架(电)(N)</div>
        <div class="tr"><i class="tri-r"></i>消防</div>
        <div class="tr"><i class="tri-d"></i>通风空调</div>
        <div class="tc"><svg class="i22"><use href="#t-fan"/></svg>通风设备(通)(S)</div>
        <div class="tc"><svg class="i22"><use href="#t-box"/></svg>★静压箱(通)(Y)</div>
        <div class="tc"><svg class="i22"><use href="#t-duct"/></svg>通风管道(通)(F)</div>
        <div class="tc"><svg class="i22"><use href="#t-ductfit"/></svg>风管通头(通)(U)</div>
        <div class="navscroll"></div>
      </div>
    </aside>

    <div class="midcol">
      <section class="panel listp">
        <div class="pclose"><span>×</span></div>
        <div class="ptitle">构件列表</div>
        <div class="ptools list-tools">
          <span class="tb tb-new"><svg class="i20"><use href="#l-new"/></svg>新建<i class="caret"></i></span>
          <span class="tb tb-del"><svg class="i20"><use href="#r-trash"/></svg>删除</span>
          <span class="tb tb-cpy"><svg class="i20"><use href="#r-copy"/></svg>复制</span>
          <span class="tb"><svg class="i20"><use href="#l-lib"/></svg>构件库</span>
          <span class="more"><svg class="i10"><use href="#more2"/></svg></span>
        </div>
        <div class="psearch"><span>搜索构件...</span><svg class="i14"><use href="#mag"/></svg></div>
        <div class="ltree">
          <div class="lt-root"><i class="tri-d"></i>电气设备(电)</div>
          <div class="lt-item">风机盘管 [风机盘管]</div>
          <div class="lt-item lt-on">XF风机 [XF风机]</div>
        </div>
      </section>
      <section class="panel propp">
        <div class="pclose"><span>×</span></div>
        <div class="ptitle">属性</div>
        <div class="ptable">
          <div class="pr pr-head"><span class="c-no"></span><span class="c-name-h">属性名称</span><span class="c-val-h">属性值</span></div>
          <div class="pr"><span class="c-no">1</span><span class="c-name link">名称</span><span class="c-val">风机盘管</span></div>
          <div class="pr"><span class="c-no">2</span><span class="c-name link">类型</span><span class="c-val">风机盘管</span></div>
          <div class="pr"><span class="c-no">3</span><span class="c-name link">规格型号</span><span class="c-val"></span></div>
          <div class="pr"><span class="c-no c-no-on">4</span><span class="c-name link">容量(KV.A)</span><span class="c-val c-val-edit"></span></div>
          <div class="pr"><span class="c-no">5</span><span class="c-name">标高(m)</span><span class="c-val">层底标高+3.7(3...</span></div>
          <div class="pr"><span class="c-no">6</span><span class="c-name">所在位置</span><span class="c-val"></span></div>
          <div class="pr"><span class="c-no">7</span><span class="c-name">系统类型</span><span class="c-val">通风</span></div>
          <div class="pr"><span class="c-no">8</span><span class="c-name">配电箱信息</span><span class="c-val"></span></div>
          <div class="pr"><span class="c-no">9</span><span class="c-name">汇总信息</span><span class="c-val">电气设备(电)</span></div>
          <div class="pr"><span class="c-no"></span><span class="c-name"></span><span class="c-val"></span></div>
          <div class="pscroll"></div>
        </div>
        <div class="pbtns"><span>图例</span><span>实体模型</span><span>提属性</span></div>
      </section>
    </div>

    <div class="gutter"><i></i></div>

    <section class="canvas">
      <svg class="cad" viewBox="550 212 967 778">
        <g fill="none" stroke="#a9a9a9" stroke-width="1">
          <circle cx="1033.500" cy="601" r="370.500"/>
          <ellipse cx="1033.500" cy="231" rx="37" ry="38"/>
          <ellipse cx="1033.500" cy="971" rx="37" ry="38"/>
          <ellipse cx="663" cy="601" rx="37" ry="37.500"/>
          <ellipse cx="1404" cy="601" rx="37" ry="37.500"/>
        </g>
        <g fill="none" stroke="#5b57cf" stroke-width="1">
          <path d="M550 278L685 273L731 287L581 292L550 284"/>
          <path d="M575 281Q576 277 600 277L670 278Q692 281 686 285Q670 288 600 287Q574 286 575 281M610 280H645M620 284H655"/>
        </g>
        <g fill="none" stroke="#7096cf" stroke-width="4.500">
          <path d="M550 432.500L896 421.500"/>
          <path d="M992 500L1477 486"/>
          <path d="M770.500 436V990"/>
          <path d="M1156 496V600"/>
        </g>
        <g fill="none" stroke="#4f6c99" stroke-width="4.500">
          <path d="M896 421L1156 494"/>
          <path d="M770 435L992 501"/>
        </g>
        <g fill="none" stroke="#1a74d8" stroke-width="1.300">
          <path d="M1055 596L1210 592L1257 606L1102 611Z"/>
          <path d="M1098 601Q1098 597 1120 597L1195 596Q1218 598 1214 603Q1200 607 1120 607Q1096 606 1098 601M1125 599H1148M1165 599H1190M1130 603H1200"/>
        </g>
        <rect x="1148" y="593" width="15" height="15" fill="#00f000"/>
        <g class="gizmo">
          <path d="M610.500 905h4.500v20h-4.500z" fill="#0000ff"/>
          <path d="M612.500 892l7 14h-13.500z" fill="#0000ff"/>
          <path d="M618 926h15v5h-15z" fill="#ee0000"/>
          <path d="M632 920l15 8-15 7z" fill="#ee0000"/>
          <path d="M599 921l8-1 3 3v10h-8l-3-6z" fill="#00dd00"/>
          <rect x="608" y="925" width="10" height="8" fill="#d2d2d2"/>
          <text x="604" y="892" fill="#1010e8">Z</text>
          <text x="650" y="934" fill="#e01010">X</text>
          <text x="593" y="930" fill="#10d010">Y</text>
        </g>
      </svg>
      <div class="strip">
        <svg><use href="#s-planet"/></svg>
        <svg viewBox="0 0 30 30"><rect x="3" y="3" width="24" height="24" rx="2" fill="none" stroke="#666" stroke-width="1.300"/><text x="5" y="25" font-size="11" font-weight="700" fill="#2f80ed" font-family="Liberation Sans">2D</text></svg>
        <svg><use href="#s-cube"/></svg>
        <i class="caret caret-strip"></i>
        <svg><use href="#s-cubef"/></svg>
        <i class="caret caret-strip"></i>
        <svg><use href="#s-rot"/></svg>
        <i class="caret caret-strip"></i>
        <hr class="strip-line">
        <svg><use href="#s-list"/></svg>
      </div>
    </section>

    <div class="gutter"><i></i></div>

    <aside class="panel draw">
      <div class="pclose"><span>×</span></div>
      <div class="ptitle">图纸管理</div>
      <div class="ptools draw-tools">
        <span class="tb tb-add"><svg class="i20"><use href="#l-add"/></svg>添加</span>
        <span class="tb tb-loc off"><svg class="i20"><use href="#l-locate"/></svg>定位<i class="caret"></i></span>
        <span class="tb tb-man off"><svg class="i20" viewBox="0 0 20 20"><path d="M6 1H2v6M14 1l4 4v5M2 12v6h4" fill="none" stroke="#ccc" stroke-width="1.400"/><text x="9" y="19" font-size="11" fill="#ccc" font-family="Liberation Sans">A</text></svg>手动分割<i class="caret"></i></span>
        <span class="tb"><svg class="i20"><use href="#l-copy2"/></svg>复制</span>
        <span class="more"><svg class="i10"><use href="#more2"/></svg></span>
      </div>
      <div class="psearch psearch-d"><span>搜索图纸...</span><svg class="i14"><use href="#mag"/></svg></div>
      <div class="dtable">
        <div class="dr dr-head"><span></span><span class="d-h">图纸名称</span><span>比例</span><span>楼层</span><span>分层</span></div>
        <div class="dr"><span>1</span><span class="d-n d-1"><i class="minus"></i>风机盘管平面...</span><span></span><span></span><span></span></div>
        <div class="dr"><span>2</span><span class="d-n d-2"><i class="minus"></i>模型</span><span>1:1</span><span>首层</span><span class="d-s">分层1</span></div>
        <div class="dr dr-on"><span class="d-no-on">3</span><span class="d-n d-3 d-cur">一层风机...</span><span>1:1</span><span>首层</span><span class="d-s">分层1</span></div>
        <div class="dr"><span>4</span><span class="d-n d-3">二层风机...</span><span>1:1</span><span>第2层</span><span class="d-s">分层1</span></div>
        <div class="dr"><span>5</span><span class="d-n d-3">三层风机...</span><span>1:1</span><span>第3层</span><span class="d-s">分层1</span></div>
        <div class="dr"><span>6</span><span class="d-n d-3">四层风机...</span><span>1:1</span><span>第4层</span><span class="d-s">分层1</span></div>
        <div class="dr"><span>7</span><span class="d-n d-3">五层风机...</span><span>1:1</span><span>第5层</span><span class="d-s">分层1</span></div>
        <div class="dr"><span>8</span><span class="d-n d-3">六层风机...</span><span>1:1</span><span>第6层</span><span class="d-s">分层1</span></div>
        <div class="dr"><span>9</span><span class="d-n d-3">七层风机...</span><span>1:1</span><span>第7层</span><span class="d-s">分层1</span></div>
        <div class="dr"><span>10</span><span class="d-n d-3">八层风机...</span><span>1:1</span><span>第8层</span><span class="d-s">分层1</span></div>
        <div class="dr"><span>11</span><span class="d-n d-3">九层风机...</span><span>1:1</span><span>第9层</span><span class="d-s">分层1</span></div>
        <div class="dr"><span>12</span><span class="d-n d-3">十层风机...</span><span>1:1</span><span>第10层</span><span class="d-s">分层1</span></div>
        <div class="dr"><span>13</span><span class="d-n d-3 d-last">十一层风...</span><span>1:1</span><span>第11层</span><span class="d-s">分层1</span></div>
        <div class="dr"><span>14</span><span class="d-n d-1"><i class="minus"></i>系统图.dwg</span><span></span><span></span><span></span></div>
        <div class="dr"><span>15</span><span class="d-n d-4">模型</span><span>1:1</span><span>首层</span><span class="d-s">分层1</span></div>
      </div>
    </aside>
  </main>

  <footer class="status">
    <span class="st st-coord">X = 20744.52 Y = -22295.91 Z = 6069.59</span>
    <span class="st st-h">层高：4.5</span>
    <span class="st st-b">底标高：0</span>
    <span class="st st-c">1(17)</span>
    <span class="st st-c">隐藏：0</span>
    <div class="sbtns">
      <span class="sb sb-s"><svg class="i20"><use href="#b-angle"/></svg></span>
      <span class="sb sb-w sb-on"><svg class="i20"><use href="#b-rect"/></svg><i class="caret"></i></span>
      <span class="sb sb-w"><svg class="i20"><use href="#b-cube"/></svg><i class="caret"></i></span>
      <span class="sb sb-s"><svg class="i20"><use href="#b-x"/></svg></span>
      <span class="sb sb-w"><svg class="i20"><use href="#b-ang"/></svg><i class="caret"></i></span>
      <span class="sb sb-w"><svg class="i20"><use href="#b-pm"/></svg><i class="caret"></i></span>
      <span class="sb sb-s"><svg class="i20"><use href="#b-tile"/></svg></span>
      <span class="sb sb-s"><svg class="i20"><use href="#b-curve"/></svg></span>
    </div>
    <span class="st st-cad">CAD图亮度：100%</span>
    <div class="zoomer">
      <span class="sb sb-s"><svg class="i20" viewBox="0 0 20 20"><circle cx="10" cy="10" r="7.500" fill="none" stroke="#6a94cc" stroke-width="1.300"/><path d="M6 10h8" stroke="#2f80ed" stroke-width="1.300"/></svg></span>
      <span class="track"><i></i></span>
      <span class="sb sb-s"><svg class="i20" viewBox="0 0 20 20"><circle cx="10" cy="10" r="7.500" fill="none" stroke="#6a94cc" stroke-width="1.300"/><path d="M6 10h8M10 6v8" stroke="#2f80ed" stroke-width="1.300"/></svg></span>
    </div>
    <span class="st st-hint">按鼠标左键指定第一个角点，或拾取构件图元</span>
  </footer>

  <div class="taskbar">
    <span class="start"><svg class="i20" viewBox="0 0 20 20"><path d="M0 3l8.500-1.200v7.700H0zM9.500 1.600L20 0v9.500H9.500zM0 10.500h8.500v7.700L0 17zM9.500 10.500H20V20L9.500 18.400z" fill="#fff"/></svg></span>
    <div class="tsearch">
      <svg class="tmag" viewBox="0 0 24 24"><circle cx="14" cy="10" r="7.500" fill="none" stroke="#222" stroke-width="1.500"/><path d="M8.500 15.500L2 22" stroke="#222" stroke-width="1.500"/></svg>
      <span>在这里输入你要搜索的内容</span>
    </div>
    <span class="tslot tslot-c"><i class="cortana"></i></span>
    <span class="tslot tslot-v"><svg class="i20" viewBox="0 0 20 20"><path d="M2 1h10M2 19h10M2 6h10v8H2zM17 1v4M17 8v3M17 14v5" fill="none" stroke="#fff" stroke-width="1.200"/></svg></span>
    <span class="tapp"><svg class="i30" viewBox="0 0 30 30"><circle cx="15" cy="15" r="14" fill="url(#edgeGrad)"/><path d="M29 16c-1-7-6-10-12-10-5 0-9 3-10 7 3-3 8-4 11-2 3 1 3 4 1 4h-4c-2 4 1 9 7 8-8 3-14-1-15-6" fill="#0e4f94"/></svg></span>
    <span class="tapp t-open"><svg class="i30" viewBox="0 0 30 30"><path d="M2 3h11l2 4H2z" fill="#e8a21c"/><path d="M2 7h26v21H2z" fill="#fdd65a"/><path d="M9 19h12v9H9z" fill="#3d8fd8"/><path d="M12 23h6v5h-6z" fill="#8fd0f5"/></svg></span>
    <span class="tapp"><svg class="i30" viewBox="0 0 30 30"><path d="M1 9l14-7 14 7v18H1z" fill="#fff"/><path d="M1 9l14 9 14-9M29 27L17 17" fill="none" stroke="#1f3540" stroke-width="1.300"/><path d="M1 9l14-7 14 7-14 9z" fill="#fff" stroke="#1f3540" stroke-width=".6"/></svg></span>
    <span class="tapp t-open"><svg class="i30" viewBox="0 0 30 30"><circle cx="15" cy="15" r="13" fill="#fff"/><circle cx="15" cy="15" r="11" fill="#67c23a"/><text x="8" y="22" font-size="22" font-weight="700" fill="#fff" font-family="Liberation Sans">e</text><path d="M3 27C0 14 12 2 26 1" fill="none" stroke="#2f9e26" stroke-width="1.500"/></svg></span>
    <span class="tapp"><svg class="i30 baidu" viewBox="0 0 30 30"><rect width="30" height="30" fill="#fff"/><ellipse cx="8" cy="10" rx="2.500" ry="3.500" fill="#2a5fe0"/><ellipse cx="13" cy="6" rx="2.500" ry="3.500" fill="#2a5fe0"/><ellipse cx="18" cy="6" rx="2.500" ry="3.500" fill="#2a5fe0"/><ellipse cx="23" cy="10" rx="2.500" ry="3.500" fill="#2a5fe0"/><path d="M15 11c4 0 5 4 8 6 3 3 0 9-4 8-3-1-5-1-8 0-4 1-7-5-4-8 3-2 4-6 8-6z" fill="#2a5fe0"/><text x="9" y="23" font-size="9" font-weight="700" fill="#fff" font-family="Liberation Sans">du</text></svg></span>
    <span class="tapp t-open"><svg class="i30" viewBox="0 0 30 30"><rect x="1" y="1" width="28" height="28" rx="3" fill="#5d7893"/><rect x="3" y="3" width="24" height="24" rx="2" fill="#0f3e78"/><text x="4" y="20" font-size="11" font-weight="700" fill="#fff" font-family="Liberation Sans">CAD</text></svg></span>
    <span class="tapp t-open t-active"><svg class="i30" viewBox="0 0 30 30"><rect x="1" y="1" width="28" height="28" rx="5" fill="url(#appGrad)"/><g transform="translate(-1 -1) scale(.62)" fill="none" stroke="#4f52c8" stroke-linecap="round"><path d="M15 38L28 12c2-3 4-3 5 0l10 26" stroke-width="6"/><path d="M23 32c4-7 9-9 12-5 3 3 7 8 9 11" stroke-width="5"/></g></svg></span>
    <span class="tapp t-open"><svg class="i30" viewBox="0 0 30 30"><path d="M1 5l5 22h5l4-13 4 13h5l5-22h-5l-3 14-4-14h-4l-4 14L5 5z" fill="#e8261c"/></svg></span>
    <div class="tray">
      <span class="ts ts-sun"><svg class="i30 sun" viewBox="0 0 30 30"><ellipse cx="15" cy="15" rx="12" ry="14" fill="url(#sunGrad)"/></svg></span>
      <span class="ts ts-wx">4°C&nbsp;&nbsp;晴朗</span>
      <span class="ts ts-30"><svg class="i14" viewBox="0 0 14 14"><path d="M0 10l7-7 7 7" fill="none" stroke="#fff" stroke-width="1.200"/></svg></span>
      <span class="ts ts-30"><svg class="i20" viewBox="0 0 20 20"><path d="M2 18C2 10 8 3 18 2M6 18c0-5 4-10 11-11M10 18c0-3 2-6 6-6" fill="none" stroke="#ddd" stroke-width="1.200" stroke-dasharray="2 1"/><circle cx="16" cy="17" r="1.500" fill="#fff"/></svg></span>
      <span class="ts ts-28"><svg class="i20" viewBox="0 0 20 20"><path d="M1 7h4l5-4v14l-5-4H1zM13 7l6 6M19 7l-6 6" fill="none" stroke="#fff" stroke-width="1.100"/></svg></span>
      <span class="ts ts-34"><svg class="i20" viewBox="0 0 20 20"><rect x="1" y="6" width="18" height="11" fill="none" stroke="#fff"/><rect x="3" y="8" width="13" height="7" fill="#fff"/><path d="M3 1v4M6 1v4" stroke="#fff"/></svg></span>
      <span class="ts ts-28 ts-zh">中</span>
      <span class="ts ts-40"><svg class="i20 sogou" viewBox="0 0 20 20"><rect x="1" y="1" width="18" height="18" rx="3" fill="#e8501e"/><path d="M15 6c-2-2-8-2-9 1s8 3 8 6-7 3-9 1" fill="none" stroke="#fff" stroke-width="2.500"/></svg></span>
      <span class="ts ts-time"><b>15:02</b><b>2022/1/25</b></span>
      <span class="ts ts-46"><svg class="i20" viewBox="0 0 20 20"><path d="M1 1h18v15h-7l-2 3-2-3H1z" fill="none" stroke="#fff" stroke-width="1.200"/></svg></span>
    </div>
  </div>
</div>
</body>
</html>
```

FILE: styles.css
```css
* { box-sizing: border-box; }
html, body { margin: 0; padding: 0; width: 1920px; height: 1080px; overflow: hidden; background: #f0f0f0; }
body { font-family: "Noto Sans CJK SC", "Noto Sans", sans-serif; font-size: 15px; color: #444; }
i { font-style: normal; }
.sprite { position: absolute; width: 0; height: 0; overflow: hidden; }
.app { width: 1920px; height: 1080px; display: flex; flex-direction: column; filter: blur(.4px); }

.i10 { width: 10px; height: 10px; }
.i12 { width: 12px; height: 12px; }
.i14 { width: 14px; height: 14px; flex: none; }
.i20 { width: 20px; height: 20px; flex: none; }
.i22 { width: 22px; height: 22px; flex: none; }
.i30 { width: 30px; height: 30px; flex: none; }
.i42 { width: 42px; height: 42px; flex: none; }

.caret { display: inline-block; width: 0; height: 0; border-left: 4px solid transparent; border-right: 4px solid transparent; border-top: 4px solid #777; margin-left: 8px; flex: none; }
.caret-light { border-top-color: #ccc; }

/* header */
.header { height: 51px; background: #fff; display: flex; }
.logo { width: 60px; flex: none; }
.logo-svg { width: 60px; height: 50px; display: block; }
.header-main { flex: 1; display: flex; flex-direction: column; min-width: 0; }
.titlebar { height: 24px; display: flex; align-items: center; }
.quick { display: flex; align-items: center; margin-left: 2px; width: 369px; flex: none; }
.q { width: 32.700px; display: flex; justify-content: center; align-items: center; }
.q-undo { width: 44px; justify-content: flex-start; padding-left: 6px; }
.q-redo { width: 43px; justify-content: flex-start; padding-left: 6px; }
.q-more { width: 22px; }
.q .caret { margin-left: 5px; }
.title { margin-left: 206px; white-space: nowrap; font-size: 15px; letter-spacing: .45px; color: #404040; }
.winbtns { margin-left: auto; display: flex; width: 137px; }
.wb { width: 46px; display: flex; justify-content: center; align-items: center; }
.tabsbar { height: 27px; padding-top: 3px; display: flex; align-items: center; }
.tabs { display: flex; gap: 33px; margin-left: 18px; line-height: 24px; color: #444; }
.tab-on { background: #1a90f7; color: #fff; border-radius: 12px; padding: 0 16px; margin: 0 -16px; }
.userbar { margin-left: auto; display: flex; align-items: center; }
.avatar { width: 20px; height: 20px; }
.uname { width: 61px; color: #444; }
.u-head { margin-left: 20px; }
.u-help { margin-left: 10px; width: 8px; color: #666; }
.caret-help { margin-left: 2px; border-width: 3px; border-top-width: 3px; }
.u-shirt { margin-left: 13px; }
.usearch { margin-left: 6px; width: 185px; height: 20px; border: 1px solid #ddd; border-radius: 4px; background: #f7f7f7; display: flex; align-items: center; justify-content: space-between; padding: 0 6px 0 3px; color: #aaa; font-size: 14px; }
.u-up { margin: 0 9px 0 5px; }

/* ribbon */
.ribbon { height: 126px; background: #fff; display: flex; border-bottom: 2px solid #e2e2e2; padding-top: 3px; }
.rg { height: 118px; border-right: 1px solid #dedede; display: flex; flex-direction: column; flex: none; }
.rb { height: 94px; display: flex; }
.rl { height: 24px; line-height: 24px; display: flex; justify-content: center; align-items: center; color: #555; padding-bottom: 1px; }
.g1 { width: 178px; }
.g2 { width: 346px; }
.g2 .rb { padding-left: 10px; }
.g3 { width: 274px; }
.g3 .rb { padding-left: 12px; }
.g4 { width: 95px; }
.g4 .rb { padding-left: 17px; }
.g5 { width: 71px; }
.g5 .rl { padding-left: 6px; }
.g6 { width: 258px; }
.g6 .rb { padding-left: 11px; }
.g7 { width: 98px; }
.g8 { width: 273px; }
.g8 .rb { padding-left: 10px; }
.g9 { width: 240px; }
.g9 .rb { padding-left: 10px; }
.g5 .rb, .g7 .rb { justify-content: center; }
.g6 .big { width: 70px; margin-right: 6px; }
.g6 .big svg { margin-right: 5px; }
.g7 .big svg { margin-right: 10px; }
.big { display: flex; flex-direction: column; align-items: center; line-height: 30px; padding-top: 2px; white-space: nowrap; }
.big-sel { width: 74px; margin-right: -6px; flex: none; }
.sel-icon { width: 26px; height: 34px; margin: 3px 12px 3px 0; }
.col { display: flex; flex-direction: column; flex: none; }
.c108 { width: 108px; }
.c139 { width: 139px; }
.c167 { width: 167px; }
.c40 { width: 40px; }
.c109 { width: 109px; }
.c121 { width: 121px; }
.ri { height: 29px; display: flex; align-items: center; gap: 4px; white-space: nowrap; color: #444; }
.ri .caret { margin-left: 6px; }
.off { color: #bfbfbf; }

/* combos */
.combos { height: 33px; background: #f0f0f0; display: flex; gap: 8.500px; padding: 4px 0 0 3px; }
.combo { width: 123px; height: 26px; background: #fff; border-radius: 4px; display: flex; align-items: center; justify-content: space-between; padding: 0 7px 2px 4px; overflow: hidden; white-space: nowrap; }
.combo span { overflow: hidden; }
.combo .caret { border-width: 3px; border-top-width: 4px; margin-left: 0; }

/* main */
.main { height: 780px; display: flex; background: #f0f0f0; }
.panel { background: #fff; display: flex; flex-direction: column; min-height: 0; }
.nav { width: 216px; flex: none; margin-right: 7px; }
.midcol { width: 321px; flex: none; display: flex; flex-direction: column; }
.listp { height: 431px; flex: none; }
.propp { flex: 1; margin-top: 6px; }
.pclose { height: 15px; background: #e5e5e5; color: #aaa; text-align: right; padding-right: 2px; font-size: 16px; line-height: 16px; flex: none; }
.ptitle { height: 29px; background: #f0f0f0; color: #777; line-height: 26px; padding-left: 10px; flex: none; border-top: 1px solid #ddd; }
.ptools { height: 34px; display: flex; align-items: center; flex: none; border-bottom: 2px solid #f0f0f0; white-space: nowrap; }
.nav-tools { padding-left: 7px; gap: 10px; }
.navtree { flex: 1; position: relative; padding-top: 4px; overflow: hidden; display: flex; flex-direction: column; }
.tr { height: 30px; display: flex; align-items: center; padding: 0 0 2px 15px; color: #444; white-space: nowrap; flex: none; }
.tri-r { width: 0; height: 0; border-top: 4px solid transparent; border-bottom: 4px solid transparent; border-left: 5px solid #777; margin-right: 10px; flex: none; }
.tri-d { width: 0; height: 0; border-left: 4px solid transparent; border-right: 4px solid transparent; border-top: 5px solid #777; margin-right: 8px; margin-left: -1px; flex: none; }
.tc { height: 26px; margin: 2px 22px 2px 51px; display: flex; align-items: center; gap: 8px; padding: 0 0 2px 3px; border-radius: 3px; white-space: nowrap; flex: none; }
.tc-on { background: #c3dbf5; }
.navscroll { position: absolute; right: 4px; top: 21px; width: 9px; height: 434px; background: #c8c8c8; border-radius: 5px; }

.list-tools { padding-left: 5px; position: relative; }
.tb { display: flex; align-items: center; gap: 6px; }
.tb-new { width: 79px; }
.tb-new .caret { margin-left: 6px; border-width: 3px; border-top-width: 4px; }
.tb-del { width: 64px; }
.tb-cpy { width: 67px; }
.more { position: absolute; right: 2px; top: 3px; width: 13px; height: 26px; background: #fff; border: 1px solid #eee; border-radius: 4px; display: flex; align-items: center; justify-content: center; }
.psearch { height: 24px; display: flex; align-items: center; justify-content: space-between; padding: 0 6px 2px 3px; color: #b0b0b0; border-bottom: 1px solid #eee; flex: none; }
.ltree { flex: 1; border-bottom: 1px solid #ddd; padding-top: 3px; display: flex; flex-direction: column; }
.lt-root { height: 30px; display: flex; align-items: center; padding: 0 0 2px 18px; flex: none; }
.lt-root .tri-d { margin-right: 5px; }
.lt-item { height: 26px; margin: 2px 0 2px 51px; width: 144px; padding-left: 3px; line-height: 26px; border-radius: 3px; white-space: nowrap; flex: none; }
.lt-on { background: #c3dbf5; }

.ptable { height: 267px; overflow: hidden; position: relative; flex: none; background: #fff; }
.pr { display: grid; grid-template-columns: 28px 143px 129px; height: 26.200px; border-bottom: 1px solid #e4e4e4; width: 300px; }
.pr span { border-right: 1px solid #e4e4e4; line-height: 23px; padding-left: 4px; white-space: nowrap; overflow: hidden; }
.pr .c-no { padding-left: 0; text-align: center; }
.pr .c-name-h { text-align: center; padding: 0; }
.pr .c-val-h { text-align: center; padding: 0; background: #7ab8f5; color: #fff; }
.link { color: #2a6fdd; }
.pr .c-no-on { background: #7ab8f5; color: #fff; }
.pr .c-val-edit { border: 3px solid #777; background: #fff; }
.pscroll { position: absolute; left: 308px; top: 16px; width: 9px; height: 122px; background: #c8c8c8; border-radius: 5px; }
.pbtns { flex: 1; background: #f0f0f0; display: flex; gap: 8px; padding: 3px 0 0 0; }
.pbtns span { width: 99px; height: 31px; background: #fff; border: 1px solid #d4d4d4; border-radius: 4px; display: flex; align-items: center; justify-content: center; padding-bottom: 2px; }

.gutter { width: 6px; flex: none; display: flex; align-items: flex-start; }
.gutter i { display: block; width: 6px; height: 125px; margin-top: 331px; background: #4c5862; }

.canvas { width: 967px; height: 778px; margin-top: 2px; background: #000; position: relative; overflow: hidden; flex: none; }
.cad { width: 967px; height: 778px; display: block; }
.gizmo text { font: 20px "Liberation Sans", sans-serif; }
.strip { position: absolute; right: 0; top: 0; width: 40px; height: 283px; background: #fff; display: flex; flex-direction: column; align-items: center; padding-top: 15px; }
.strip svg { width: 26px; height: 26px; margin-bottom: 10px; flex: none; }
.caret-strip { margin: 0 0 9px; border-width: 4px; border-top-width: 5px; border-top-color: #444; }
.strip-line { width: 30px; margin: 0 0 7px; border: 0; border-top: 1px solid #555; flex: none; }

.draw { width: 397px; flex: none; }
.draw-tools { padding: 2px 0 0 8px; position: relative; height: 35px; }
.tb-add { width: 63px; }
.tb-loc { width: 79px; }
.tb-loc .caret { margin-left: 4px; border-width: 3px; border-top-width: 4px; border-top-color: #888; }
.tb-man { width: 108px; }
.tb-man .caret { margin-left: 4px; border-width: 3px; border-top-width: 4px; border-top-color: #888; }
.psearch-d { height: 31px; padding-right: 11px; padding-left: 4px; padding-bottom: 3px; border-bottom: 2px solid #f0f0f0; }
.dtable { flex: 1; padding: 2px 0 0 2px; }
.dr { display: grid; grid-template-columns: 27px 139px 63px 89px 64px; height: 26.200px; width: 382px; border-bottom: 1px solid #e4e4e4; }
.dr > span { border-right: 1px solid #e4e4e4; line-height: 23px; text-align: center; white-space: nowrap; position: relative; }
.dr-head > .d-h { background: #7ab8f5; color: #fff; }
.dr > .d-n { text-align: left; }
.dr > .d-1 { padding-left: 27px; }
.dr > .d-2 { padding-left: 39px; }
.dr > .d-3 { padding-left: 51px; color: #444; }
.dr > .d-4 { padding-left: 39px; }
.dr > .d-s { text-align: left; padding-left: 4px; }
.minus { position: absolute; top: 5px; width: 15px; height: 15px; border: 1px solid #888; border-radius: 2px; background: #fff; }
.minus::before { content: ""; position: absolute; left: 3px; right: 3px; top: 6px; height: 1px; background: #555; }
.d-1 .minus { left: 4px; }
.d-2 .minus { left: 16px; }
.d-3::before { content: ""; position: absolute; left: 24px; top: 0; bottom: 0; width: 1px; background: #ddd; }
.d-3::after { content: ""; position: absolute; left: 24px; top: 13px; width: 20px; height: 1px; background: #ddd; }
.d-last::before { bottom: 12px; }
.d-4::before { content: ""; position: absolute; left: 11px; top: 0; height: 13px; width: 1px; background: #ddd; }
.d-4::after { content: ""; position: absolute; left: 11px; top: 13px; width: 20px; height: 1px; background: #ddd; }
.dr-on > span { background: #d6e9fb; }
.dr-on > .d-no-on { background: #7ab8f5; color: #fff; }
.dr-on > .d-cur { outline: 3px solid #777; outline-offset: -3px; }

/* status */
.status { height: 40px; background: #fff; display: flex; align-items: center; white-space: nowrap; flex: none; }
.st { flex: none; color: #444; padding-bottom: 2px; }
.st-coord { width: 332px; padding-left: 3px; letter-spacing: .35px; word-spacing: 2px; }
.st-h { width: 140px; }
.st-b { width: 167px; }
.st-c { width: 129px; }
.sbtns { display: flex; gap: 5px; width: 330px; flex: none; }
.sb { height: 31px; border: 1.500px solid #cfcfcf; border-radius: 4px; display: flex; align-items: center; justify-content: center; background: #fff; flex: none; }
.sb-s { width: 30px; }
.sb-w { width: 44px; gap: 2px; justify-content: flex-start; padding-left: 3px; }
.sb .caret { margin-left: 3px; border-width: 3px; border-top-width: 4px; border-top-color: #555; }
.sb-on { background: #d6e6fa; border-color: #8fb8ea; }
.st-cad { width: 142px; margin-left: 7px; letter-spacing: .3px; }
.zoomer { display: flex; align-items: center; width: 117px; flex: none; margin-right: 2px; }
.track { flex: 1; height: 3px; background: #d0d0d0; position: relative; }
.track i { position: absolute; right: 2px; top: -12px; width: 9px; height: 27px; background: #e4e6ea; border: 1.500px solid #888; border-radius: 3px; }

/* taskbar */
.taskbar { height: 50px; flex: none; display: flex; align-items: stretch; background: linear-gradient(90deg, #1f3540 0%, #1f3540 55%, #1c2b44 75%, #1c2b44 100%); color: #fff; }
.start { width: 60px; display: flex; align-items: center; justify-content: center; }
.tsearch { width: 430px; background: #f0f0f0; color: #333; display: flex; align-items: center; font-size: 19px; border-top: 1px solid #888; padding-left: 15px; gap: 14px; }
.tmag { width: 22px; height: 22px; flex: none; }
.tslot { display: flex; align-items: center; justify-content: center; }
.tslot-c { width: 59px; }
.tslot-v { width: 64.500px; }
.cortana { width: 17px; height: 17px; border: 2.500px solid #fff; border-radius: 50%; }
.tapp { width: 61.500px; display: flex; align-items: center; justify-content: center; position: relative; flex: none; }
.t-open::after { content: ""; position: absolute; left: 5px; right: 5px; bottom: 0; height: 3px; background: #76b5e8; }
.t-active { background: #4c5d66; }
.t-active::after { left: 0; right: 0; }
.tray { margin-left: auto; display: flex; align-items: center; height: 50px; padding-right: 18px; }
.ts { display: flex; align-items: center; justify-content: center; flex: none; }
.ts-sun { width: 32px; }
.ts-wx { width: 100px; padding-left: 10px; justify-content: flex-start; font-size: 18px; white-space: nowrap; }
.ts-30 { width: 30px; }
.ts-28 { width: 28px; }
.ts-34 { width: 34px; }
.ts-40 { width: 40px; }
.ts-46 { width: 46px; }
.ts-zh { font-size: 18px; }
.ts-time { width: 98px; flex-direction: column; font-size: 15.500px; line-height: 23px; }
.ts-time b { font-weight: 400; }
```
